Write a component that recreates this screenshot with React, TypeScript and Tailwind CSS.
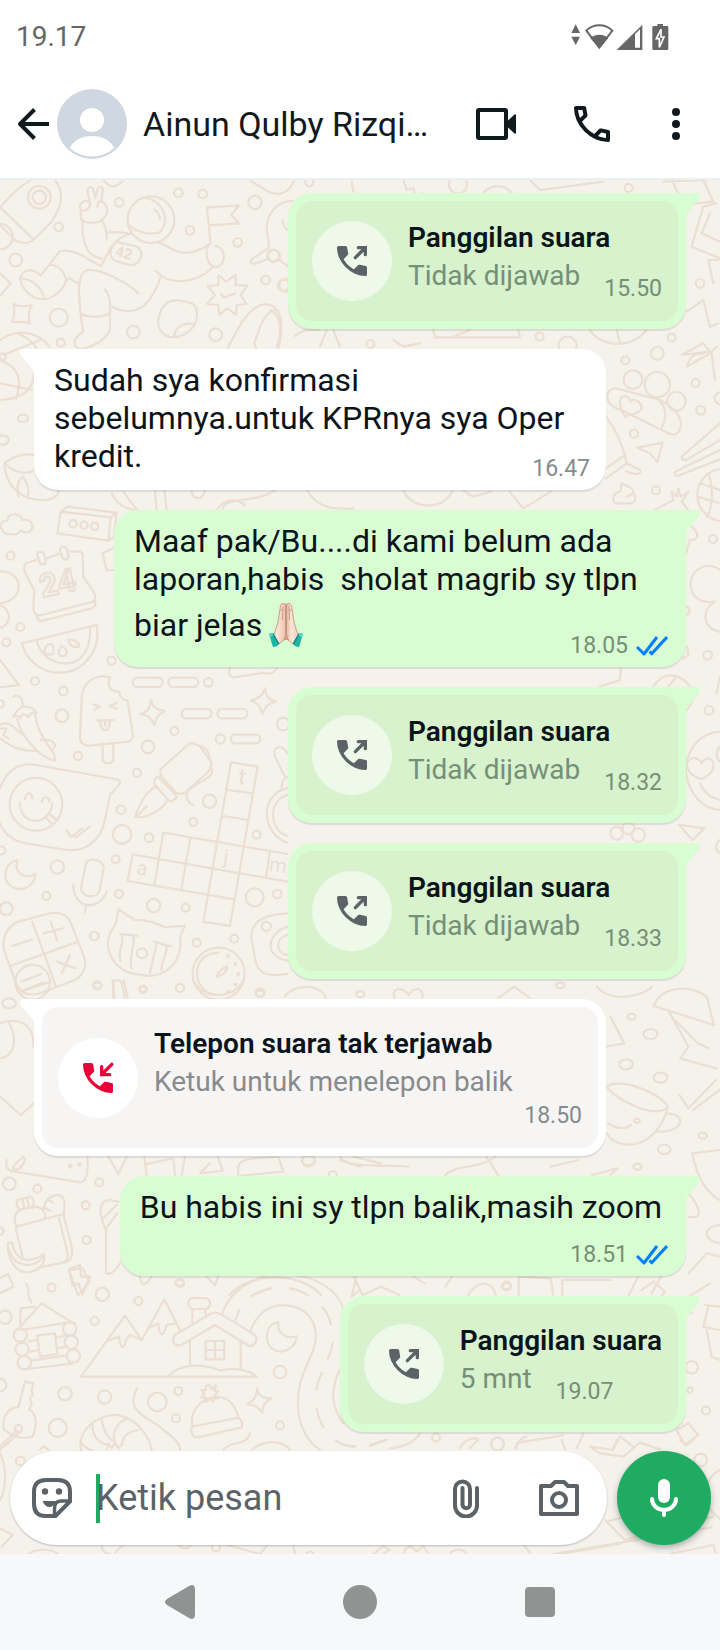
// src/App.tsx
import type { ReactNode } from 'react';

type Message =
  | { kind: 'call'; out: boolean; missed?: boolean; title: string; detail: string; time: string }
  | { kind: 'text'; out: boolean; body: string; emoji?: boolean; time: string; wide?: boolean };

const messages: Message[] = [
  { kind: 'call', out: true, title: 'Panggilan suara', detail: 'Tidak dijawab', time: '15.50' },
  { kind: 'text', out: false, body: 'Sudah sya konfirmasi sebelumnya.untuk KPRnya sya Oper kredit.', time: '16.47' },
  {
    kind: 'text',
    out: true,
    body: 'Maaf pak/Bu....di kami belum ada laporan,habis  sholat magrib sy tlpn biar jelas',
    emoji: true,
    time: '18.05',
  },
  { kind: 'call', out: true, title: 'Panggilan suara', detail: 'Tidak dijawab', time: '18.32' },
  { kind: 'call', out: true, title: 'Panggilan suara', detail: 'Tidak dijawab', time: '18.33' },
  {
    kind: 'call',
    out: false,
    missed: true,
    title: 'Telepon suara tak terjawab',
    detail: 'Ketuk untuk menelepon balik',
    time: '18.50',
  },
  { kind: 'text', out: true, body: 'Bu habis ini sy tlpn balik,masih zoom', time: '18.51', wide: true },
  { kind: 'call', out: true, title: 'Panggilan suara', detail: '5 mnt', time: '19.07' },
];

const HANDSET =
  'M19.95 21q-3.125 0-6.175-1.363-3.05-1.362-5.55-3.862-2.5-2.5-3.862-5.55Q3 7.175 3 4.05q0-.45.3-.75T4.05 3H8.1q.35 0 .625.238.275.237.325.562l.65 3.5q.05.4-.025.675-.075.275-.275.475L6.975 10.9q.5.925 1.187 1.787.688.863 1.513 1.663.775.775 1.625 1.437.85.663 1.8 1.213l2.35-2.35q.225-.225.588-.338.362-.112.712-.062l3.45.7q.35.1.575.363.225.262.225.587v4.05q0 .45-.3.75t-.75.3Z';

// Doodle sheets: each one is a block of line art with its own origin and scale
const doodles: { at: string; lines: string[]; dots: number[][] }[] = [
  {
    at: 'translate(0 170) scale(.3333)',
    lines: [
      'M0 112C30 80 60 45 98 28M165 30C195 70 185 110 155 155L103 207C85 225 60 220 45 210L0 165M0 112L98 206',
      'M242 120C232 95 262 85 270 100L262 62C265 45 280 50 282 65L286 84L292 60C296 45 312 50 308 65L303 95C322 100 330 125 310 147C290 165 250 160 242 145ZM242 120C255 125 272 115 270 100M292 110C292 95 300 90 303 95',
      'M248 155C245 205 255 260 305 266M305 150C318 170 322 190 320 207M320 188C345 185 370 187 395 192',
      'M430 82C490 90 515 150 478 188M385 165C420 195 460 192 478 188M462 118C473 125 479 135 480 148',
      'M393 192C340 200 325 250 303 288L265 268C240 250 210 238 180 243L122 317C100 295 70 295 60 325C65 360 100 390 130 388C160 385 185 365 198 335C198 310 180 285 150 285M62 325C95 325 130 355 132 388M198 335L208 323C220 335 230 340 240 338',
      'M355 217L405 228C425 235 428 255 420 268C412 285 400 287 385 284L345 272C328 262 330 245 336 232Q342 216 355 217Z',
      'M415 370C380 335 300 295 262 300C235 310 235 350 238 385C240 430 245 460 250 485L228 503C215 530 235 540 255 535C290 525 315 510 330 480L330 408C330 380 322 365 314 358M245 434C275 443 305 443 330 430M330 408C380 435 430 430 460 370C470 355 478 335 482 320M467 303C510 350 590 340 640 290M475 217C510 225 540 280 630 222',
      'M632 222L621 113L717 106L694 135L717 160L628 166M630 222C612 235 618 290 648 291C680 290 680 230 645 228',
      'M656 315L678 335L707 315L707 345L742 347L722 375L740 402L710 405L708 434L682 415L658 434L655 405L621 402L645 375L623 348L655 345ZM663 372L672 383L705 370',
      'M500 400C520 385 560 392 580 403C597 420 592 450 582 468C565 490 540 503 515 502C490 500 470 475 475 450C480 425 485 410 500 400ZM522 500C528 470 540 460 585 460',
      'M683 535C710 480 750 400 800 403C850 408 850 470 835 537M830 420C790 420 775 490 763 520L768 535',
      'M40 402C60 412 75 410 95 405C85 425 85 445 90 460C70 455 55 455 36 456C45 435 45 420 40 402Z',
      'M0 510C60 470 120 490 148 530M10 555L120 510M50 490C80 500 100 520 110 535M0 310L32 340L0 378',
      'M885 93C830 90 800 130 800 180C805 210 810 225 805 235L755 268C745 285 765 285 800 268M838 270L862 288M848 150Q850 170 862 180',
      'M310 30C335 60 350 50 372 30M748 30L800 62C840 85 870 65 883 30',
    ],
    dots: [
      [118, 82, 34], [118, 82, 20], [453, 149, 70], [358, 97, 13], [535, 68, 13], [608, 72, 13], [570, 181, 13],
      [713, 217, 13], [797, 330, 13], [176, 171, 13], [47, 270, 19], [176, 443, 27], [400, 486, 19], [182, 518, 12],
      [647, 494, 19], [765, 97, 20], [0, 200, 38], [820, 257, 18], [857, 346, 19], [8, 560, 10],
    ],
  },
  {
    at: 'translate(270 180) scale(.3333)',
    lines: [
      'M1180 5L1310 0M1210 10L1240 75L1330 65L1300 0M1340 70L1300 80L1265 200L1350 235M1320 100L1295 160L1350 185M1345 240L1315 240L1330 310M1250 395L1300 360L1320 440L1345 430M780 0L810 30L1000 5',
      'M490 450L495 472L750 472L745 450M550 470L600 450M150 500L170 450M75 468C100 445 130 448 150 450M190 450L210 500M370 480L400 500L450 490M960 450C990 500 1080 510 1130 450M1040 450L1050 490',
      'M245 5L250 35M400 0L410 30L430 25L440 50L460 40M640 38C660 15 700 10 725 38M0 390C30 400 40 450 20 500',
    ],
    dots: [
      [564, 14, 27], [118, 7, 12], [1076, 24, 12], [1290, 310, 13], [1205, 473, 12], [809, 470, 12], [301, 492, 12],
      [893, 497, 27], [12, 228, 18], [41, 316, 17],
    ],
  },
  {
    at: 'translate(0 340) scale(.459 .3333)',
    lines: [
      'M10 370C10 440 50 485 100 480C125 475 130 460 125 450M10 370C30 345 60 340 74 345M10 370C30 400 60 405 74 390M40 470C35 440 40 420 50 410C60 430 65 450 60 475',
      'M0 180C50 175 72 150 75 100M0 60C40 80 50 120 35 175M0 130L70 150',
      'M485 505C490 470 560 490 600 450M670 452C690 500 720 510 770 505M880 452C890 500 960 520 985 455M1010 452L1030 470L1070 455M1110 455L1140 505L1200 455',
    ],
    dots: [[50, 235, 11], [5, 300, 14]],
  },
  {
    at: 'translate(0 480) scale(.3333)',
    lines: [
      'M20 162C-5 150 0 120 22 122C25 95 60 100 68 120C98 112 108 150 85 157C70 160 65 150 62 152C50 170 35 160 20 162Z',
      'M182 95L332 112L325 182L172 160ZM182 95L203 80L350 98L332 112M350 98L342 172L325 182',
      'M108 240L78 250C70 260 72 270 76 280L103 330L100 380C100 400 110 410 125 405L280 365C290 355 285 340 280 335L250 290L248 225C248 215 240 213 208 215M140 235L176 222M110 405C112 420 118 425 130 422L275 385C285 382 287 372 286 362',
      'M112 225C112 212 130 212 133 225L138 245C136 257 122 257 118 245ZM180 210C182 197 198 197 201 210L206 230C204 242 190 242 186 230Z',
      'M0 274C70 270 80 360 0 370M0 375C40 390 30 440 0 443M340 205L308 220L320 272L342 270M0 540L57 615L0 622',
      'M65 490L290 435C305 520 240 580 178 578C120 578 80 540 65 490ZM110 482C130 570 280 590 270 440',
      'M133 512C140 485 165 485 160 520C145 530 135 520 133 512ZM185 497C170 515 175 530 190 528C205 525 205 510 185 497ZM205 478C225 478 240 490 237 500C220 505 205 495 205 478Z',
      'M412 593H474A14 14 0 0 1 474 621H412A14 14 0 0 1 412 593ZM519 593H581A14 14 0 0 1 581 621H519A14 14 0 0 1 519 593ZM559 687H621A14 14 0 0 1 621 715H559A14 14 0 0 1 559 687ZM666 687H728A14 14 0 0 1 728 715H666A14 14 0 0 1 666 687ZM705 764H768A13 13 0 0 1 768 790H705A13 13 0 0 1 705 764Z',
      'M453 660C460 685 470 690 495 693C472 705 468 712 463 736C452 712 445 705 420 702C445 695 450 685 453 660ZM795 625C798 650 805 658 827 665C805 672 795 680 787 701C780 680 775 668 752 662C775 655 788 648 795 625Z',
      'M330 592C280 580 245 610 245 660L240 770C240 790 250 797 270 797L385 785C398 780 400 770 398 760L383 662C365 660 360 650 357 635C330 635 320 615 330 592ZM308 797L308 835C310 855 338 855 340 835L340 792M280 673L300 680L283 690M350 668L330 679L350 686M292 722L340 720M300 722C300 760 332 760 330 721M315 722L316 738',
      'M40 650C60 640 70 660 68 680M40 710C50 690 60 680 75 680C95 680 105 690 110 700C95 695 90 700 85 712C75 700 65 700 60 715C55 705 50 705 40 710M52 718C60 760 110 830 165 842C170 810 120 790 105 705M0 735C30 720 40 745 70 765M0 775C40 805 70 815 110 812M122 780L145 780C165 785 170 800 160 805M0 745L20 745L10 765L25 775',
      'M0 925C20 870 60 845 110 855L350 898C362 902 362 910 357 915L330 945L315 1020C300 1090 250 1115 200 1110L80 1090C40 1085 10 1060 0 1030M60 968C60 1040 150 1040 157 970M75 957C78 935 95 935 97 955M125 965C130 945 147 950 148 965M135 1012L155 1030M148 1002L168 1018M200 1050L213 1072L247 1045M227 1072L270 1040',
      'M485 865L560 798C570 788 585 788 600 800L630 840C640 855 630 870 620 880L555 938C545 945 535 942 525 935L485 890C480 882 480 872 485 865ZM475 890L530 948C530 962 510 965 505 960L465 915C460 905 465 893 475 890ZM467 920C440 935 425 960 405 1010C420 1018 480 1000 500 965M410 1010L440 978M595 797C620 800 630 820 628 835M635 865C650 900 560 910 560 950C562 965 570 972 580 975',
      'M693 847L773 860L690 1338L610 1326ZM683 930L758 940M668 1008L745 1020M398 1123L862 1205M383 1203L704 1258M398 1123L383 1203M490 1058L862 1122M490 1058L463 1216M571 1075L544 1228M810 1115L798 1192',
      'M52 1140C10 1150 5 1200 35 1220C70 1240 105 1215 106 1182C75 1200 40 1180 52 1140ZM258 1150C270 1130 310 1140 311 1165L300 1225C295 1260 245 1255 243 1225ZM220 1215C220 1290 300 1295 321 1233M258 1275L255 1297',
      'M55 1325L150 1300C185 1293 205 1310 213 1330L252 1430C262 1465 250 1485 225 1500L120 1540C85 1550 60 1540 48 1510L12 1410C5 1375 20 1340 55 1325ZM97 1325L168 1520M30 1458L235 1385M37 1398L98 1378M132 1360L190 1345M152 1325L172 1382M170 1445L225 1465M210 1425L185 1480M63 1505L125 1482M72 1530L132 1507',
      'M355 1288L405 1320C440 1320 470 1330 495 1342L555 1337L540 1370C550 1440 500 1500 420 1485C340 1475 310 1410 330 1360L348 1330ZM360 1362L412 1368M462 1385L512 1400M365 1365C375 1390 350 1410 362 1445M400 1370C405 1400 385 1430 395 1465M470 1390C465 1420 455 1450 450 1480M500 1400C500 1430 480 1450 485 1475',
      'M655 1418C565 1420 575 1545 655 1545M650 1490C655 1475 668 1462 682 1460C680 1475 668 1488 650 1490ZM340 1560L340 1510C345 1498 362 1498 366 1510L375 1560M862 1300C780 1305 750 1330 755 1380L768 1450C780 1485 810 1490 862 1482M862 1340C800 1360 790 1430 862 1442M862 1365C825 1375 825 1420 862 1425',
      'M335 40C350 70 370 85 410 92M370 35L412 92M465 32L470 92M493 30L500 92M648 92C670 60 700 50 735 75M862 925C780 940 780 1060 862 1088M862 945C805 960 805 1050 862 1068M862 890C845 900 845 910 845 925M862 820C845 790 815 800 825 830L855 890M690 565C680 590 700 595 715 590L790 578C810 585 825 578 830 565',
    ],
    dots: [
      [219, 131, 11], [252, 135, 11], [284, 139, 11], [32, 227, 12], [61, 441, 12], [19, 487, 12], [105, 603, 12],
      [190, 633, 13], [186, 707, 19], [335, 542, 12], [625, 607, 13], [523, 753, 12], [444, 801, 19], [661, 777, 14],
      [234, 828, 12], [411, 879, 12], [363, 989, 13], [366, 1063, 28], [447, 1073, 13], [629, 964, 20], [580, 1026, 12],
      [347, 1138, 12], [172, 1161, 20], [139, 1248, 12], [19, 1286, 19], [357, 1242, 12], [461, 1277, 20],
      [557, 1283, 12], [283, 1368, 13], [590, 1388, 12], [703, 1376, 12], [764, 1252, 27], [832, 1242, 13],
      [770, 1064, 12], [292, 1516, 12], [429, 1528, 11], [540, 1524, 12], [780, 1538, 13], [850, 732, 19],
      [799, 1339, 14], [108, 973, 79], [98, 1507, 52], [656, 1481, 78], [426, 1420, 15], [684, 1428, 3], [706, 1452, 3],
      [715, 1483, 3], [706, 1514, 3], [684, 1536, 3], [4, 1111, 12], [594, 35, 19], [0, 672, 12],
    ],
  },
  {
    at: 'translate(600 340) scale(.3333)',
    lines: [
      'M22 175C20 150 40 140 60 148L180 180C230 205 250 240 240 265C235 285 220 287 205 280L75 215C40 205 25 190 22 175ZM60 180C70 160 90 170 90 185C105 170 125 190 125 205C115 225 95 220 75 230C65 215 58 195 60 180ZM180 185C200 205 200 235 185 262',
      'M112 323L188 308L172 367L150 340ZM360 250L245 350C245 362 255 362 262 358L360 300M225 395L360 330M225 395C222 408 230 410 240 405L360 358',
      'M65 430C80 440 100 440 100 458C115 480 100 490 90 490L50 490C35 485 35 460 60 455C65 445 60 440 65 430ZM80 470L100 460',
      'M300 430L360 450M325 400C340 440 340 500 320 530M292 470L360 490M245 45L310 10L330 35ZM260 80L330 40L350 20M260 80C270 50 280 40 310 40M335 40L345 120',
      'M18 230C50 270 70 320 80 370L18 415M75 345L18 385M80 370L120 390C125 405 110 405 78 395M165 510L220 480L215 455L230 470L235 445L242 470L265 455L245 485L265 510',
      'M360 690C320 660 270 690 272 735C275 780 310 790 345 785C300 810 310 870 360 875M275 560C300 580 295 600 270 600L258 640M258 800C275 805 270 820 258 825M262 920L265 945L250 955',
      'M360 1175C290 1180 255 1240 258 1300C270 1370 310 1405 360 1410M260 1270C280 1240 300 1260 305 1270C320 1240 350 1260 338 1290C330 1305 320 1310 305 1318C280 1310 262 1300 260 1270ZM300 1330C320 1370 340 1375 360 1380M360 1220C345 1235 350 1260 360 1265',
      'M237 1455L313 1465L278 1500ZM360 1010L350 1060M160 1040C190 990 240 1000 270 1040M205 1040L225 1015M280 1080L262 1110M0 1040L60 1020L62 985',
    ],
    dots: [
      [76, 61, 12], [172, 40, 19], [99, 119, 28], [172, 134, 38], [229, 184, 28], [287, 129, 12], [302, 211, 13],
      [102, 281, 12], [168, 451, 12], [339, 597, 12], [323, 946, 13], [327, 1111, 13], [370, 465, 78], [362, 175, 18],
      [50, 1480, 19], [85, 1465, 18], [115, 1485, 20], [370, 1520, 22],
    ],
  },
  {
    at: 'translate(0 980) scale(.459 .3333)',
    lines: [
      'M1423 80C1440 20 1500 10 1540 50L1555 135L1425 78M1455 90L1500 200L1482 235L1560 265M1470 120L1520 190L1545 205M1300 20C1330 70 1400 50 1420 20M1330 110L1360 190L1320 200',
      'M1322 320C1350 290 1440 340 1455 380C1430 420 1340 360 1322 320ZM1322 460C1340 510 1430 520 1455 380M1450 400C1500 400 1490 460 1430 455M1325 430C1340 445 1360 450 1375 435M1480 345L1500 385L1560 300M1510 390L1568 330',
      'M1508 520C1520 600 1540 640 1568 660M1508 520L1568 510M1500 640C1530 690 1530 720 1500 710M1568 735C1530 740 1530 780 1568 790M1500 880L1540 820L1568 830',
      'M45 35L110 5M420 0C440 60 510 60 530 0M620 50C640 10 700 10 710 55M860 55C850 20 880 20 890 45C900 20 925 20 920 55M1085 55L1120 20L1155 55M245 0L250 55M270 0L278 55',
      'M0 130C40 110 75 130 73 200M0 350L45 405L74 370M0 235C30 230 40 180 20 130',
      'M740 530C760 570 830 550 890 560M770 530L830 550M970 585C1000 550 1040 570 1080 530M1060 530L1085 585M1200 560L1260 540M1290 585L1345 565L1330 585',
      'M500 945C540 880 650 870 700 945M550 945L590 925M770 890L790 945L830 920L870 945M900 890L925 910M970 920L985 890M1020 945C1040 900 1070 900 1080 945M1130 945L1130 890L1200 895L1205 945M1225 945L1225 900L1330 900M1390 890L1370 945M1440 890L1420 940M150 870L180 865L195 905L170 945Z',
    ],
    dots: [
      [20, 70, 15], [212, 16, 9], [312, 28, 8], [567, 40, 9], [785, 43, 9], [1221, 16, 9], [1376, 110, 9],
      [1417, 162, 15], [1364, 253, 15], [1439, 293, 15], [1388, 422, 6], [1531, 467, 9], [1447, 508, 14],
      [1389, 560, 9], [672, 542, 14], [391, 908, 9], [1103, 918, 9],
    ],
  },
  {
    at: 'translate(0 1150) scale(.3333)',
    lines: [
      'M20 30C15 55 25 62 40 64L240 97C260 95 265 70 262 20M70 20C50 40 30 50 45 60C60 60 75 40 75 25',
      'M50 230L190 192L215 290C220 325 210 335 190 338L115 353M50 230C35 200 50 178 75 175L110 170C130 175 138 190 135 205M68 320L47 235M175 197L203 310C205 330 195 338 180 340M52 150L92 140C102 145 104 160 98 170L60 178C48 170 48 160 52 150ZM68 148L72 172M82 145L86 170M130 180C135 140 170 125 188 142C200 160 190 180 192 192M145 150L160 158M135 175L152 182',
      'M24 278C20 330 50 370 85 367C115 362 135 345 133 313C120 312 120 330 80 330C50 325 38 300 37 278ZM28 300C40 350 100 360 130 320M207 358L240 345L243 380L270 380L247 433L235 400L218 408Z',
      'M60 530L125 460L212 515L225 520M60 530L62 475L105 470M65 540L200 518M85 575L110 570M170 562L195 558M112 557L165 550L172 612L120 620ZM80 657L220 640M90 605L118 600M172 595L200 590M92 632L200 616M78 402C95 420 75 430 95 458',
      'M243 680L375 497L425 570L493 448L540 540M322 573L358 560C360 600 372 600 378 570L390 555L425 570M445 535L475 520C478 560 490 565 500 525L528 520M243 680L770 680C750 660 700 652 660 662C610 640 540 640 505 678',
      'M525 555L630 492C645 485 655 488 665 494L765 555C775 570 765 590 748 588L645 525L545 585C525 590 510 575 525 555ZM570 572L570 648M722 572L722 657M617 573H673V628H617ZM645 573V628M617 600H673M577 515V478M617 478V492M581 444H614A16 16 0 0 1 614 477H581A16 16 0 0 1 581 444Z',
      'M668 488C700 400 800 370 850 372C950 375 1010 420 1030 475M750 545C780 470 830 463 860 466C940 475 960 540 940 600C900 690 890 720 895 780C900 840 930 880 960 900M1018 660C990 730 995 770 1030 820M755 438Q780 422 812 415M870 415Q900 420 925 436M967 472Q985 490 993 523M998 578Q995 605 983 628M966 668Q952 695 950 720M950 775Q955 805 970 832M705 515L717 482M1008 872Q1030 888 1062 891M1055 440L1070 378M1055 440L1080 420',
      'M835 516C800 520 790 570 815 595C850 620 890 590 890 558C860 570 830 550 835 516ZM772 715C775 740 790 745 815 745C795 755 788 765 787 789C775 770 765 765 742 762C762 752 768 745 772 715Z',
      'M577 830L710 804C725 805 730 820 725 832L595 862C575 865 570 840 577 830ZM577 828C560 750 690 690 715 803M628 704L634 718L648 706L643 722L656 724L645 734L655 745L641 744L640 756L630 746L618 756L617 743L602 742L614 732L604 720L618 720L616 708Z',
      'M75 695L100 700L95 720L98 735L90 745L95 760L88 780C110 785 112 830 98 860C70 870 40 860 12 840C5 810 20 770 55 772ZM50 842L0 890M58 848L0 900',
      'M243 900C230 820 330 780 370 800C420 815 450 870 455 900M278 825C275 860 300 880 325 885M305 805C310 850 330 870 345 875M385 805C350 815 335 850 345 875M415 840C380 845 370 860 365 885M320 900L325 880L335 895L345 878L355 895L368 882',
      'M412 715C370 790 450 800 490 840C520 860 540 880 540 900M670 900C690 870 740 890 750 850M755 900C790 870 850 870 870 900M120 900L130 888L145 900',
      'M318 370L318 240C290 180 300 150 330 150L355 155M318 370C325 375 340 370 360 340M310 205L350 165M318 235L352 190M0 385L25 372L40 410L0 430',
      'M325 20L340 45L355 72L380 20M432 10L440 78M440 42L520 25L525 75M545 75L555 20M600 70L668 62L650 10M600 70L630 40M715 78C710 40 720 30 760 25L835 20L850 65M715 78L850 65M1020 30L1080 50M420 380C425 410 435 410 455 380M620 380L645 405L655 380',
    ],
    dots: [
      [28, 101, 19], [112, 116, 12], [298, 97, 12], [257, 166, 12], [260, 270, 12], [155, 413, 12], [307, 433, 20],
      [415, 453, 12], [284, 513, 12], [540, 399, 12], [195, 731, 20], [314, 741, 20], [472, 756, 28], [535, 723, 12],
      [528, 805, 12], [173, 834, 27], [840, 666, 19], [840, 826, 12], [925, 30, 19], [15, 502, 20], [61, 555, 20],
      [66, 598, 20], [73, 638, 20], [209, 537, 20], [214, 577, 20], [220, 618, 20], [55, 836, 11], [0, 705, 19],
      [211, 49, 4], [238, 44, 4], [998, 75, 12], [0, 243, 11],
    ],
  },
  {
    at: 'translate(330 1280) scale(.3333)',
    lines: [
      'M1125 75L1170 80M1135 80L1120 140L1170 150M1130 150L1145 230L1170 240M1085 100L1060 60L1140 10M935 30L970 5L1005 35L995 48M1040 450L1075 430L1105 465L1065 495ZM20 485Q45 500 75 498M120 498L170 480M180 505C220 500 250 490 270 460M390 505C400 480 430 470 445 478L420 505M560 505C555 480 580 490 700 465M740 505L760 460M850 505L870 470L910 500',
    ],
    dots: [[530, 18, 13], [1085, 262, 19], [1128, 391, 12], [1080, 330, 8], [318, 472, 12], [503, 492, 19]],
  },
  {
    at: 'translate(0 1440) scale(.3333)',
    lines: [
      'M240 0C245 20 270 30 275 30M0 40C20 80 20 150 0 180M0 265L38 285L5 320M85 342C110 325 150 325 175 342M305 318C305 335 320 342 330 342M370 318C350 325 345 342 345 342M535 315Q555 335 575 315M680 315L780 342L800 318M880 318L885 342',
    ],
    dots: [[61, 63, 13], [648, 321, 12], [930, 344, 10]],
  },
  {
    at: 'translate(360 1440) scale(.3333)',
    lines: [
      'M30 15L75 0M605 0L615 28M690 20L720 40L790 50L840 8L900 28M690 20L760 30L770 0M735 240L795 300L1060 230M740 245L800 230M580 342L1055 262M600 342L780 312M930 342L1060 315L1068 342M490 312L512 342M130 342C140 310 160 320 170 335L190 318L205 342M40 342L70 318L88 330L70 342M270 342C280 325 310 325 320 342M465 25C475 0 490 -10 500 -10M1080 90C1030 110 1020 200 1080 235M960 0L980 15L1000 0',
    ],
    dots: [[412, 12, 19], [1022, 60, 19]],
  },
];

function Wallpaper() {
  return (
    <svg
      viewBox="0 180 720 1374"
      preserveAspectRatio="xMidYMin slice"
      className="absolute inset-0 h-full w-full [&_circle]:[vector-effect:non-scaling-stroke] [&_path]:[vector-effect:non-scaling-stroke]"
      fill="none"
      stroke="#eadfd2"
      strokeWidth="2.2"
      strokeLinecap="round"
      strokeLinejoin="round"
      aria-hidden="true"
    >
      {doodles.map((sheet) => (
        <g key={sheet.at} transform={sheet.at}>
          {sheet.lines.map((d) => (
            <path key={d} d={d} />
          ))}
          {sheet.dots.map(([cx, cy, r]) => (
            <circle key={`${cx}-${cy}-${r}`} cx={cx} cy={cy} r={r} />
          ))}
        </g>
      ))}
      <g fill="#eadfd2" stroke="none" textAnchor="middle">
        <text x="124" y="258" fontSize="15" fontWeight="700" transform="rotate(16 124 253)">
          42
        </text>
        <text x="242" y="784" fontSize="22" transform="rotate(8 242 777)">
          t
        </text>
        <text x="142" y="875" fontSize="20" transform="rotate(8 142 869)">
          a
        </text>
        <text x="226" y="864" fontSize="20" transform="rotate(8 226 858)">
          j
        </text>
        <text x="278" y="872" fontSize="20" transform="rotate(8 278 867)">
          m
        </text>
      </g>
      <text x="58" y="594" fontSize="32" fontWeight="700" strokeWidth="2" textAnchor="middle" transform="rotate(-12 58 584)">
        24
      </text>
    </svg>
  );
}

function StatusIcons() {
  return (
    <svg viewBox="0 0 294 81" className="h-[27px] w-[98px]" fill="#666" aria-hidden="true">
      <path d="M14 1L27 27H1zM1 38H27L14 63z" />
      <path d="M85 32c12 0 20 4 27 10L85 73 58 42c7-6 15-10 27-10z" />
      <path d="M85 4c17 0 29 6 39 16L85 71 46 20C56 10 68 4 85 4z" fill="none" stroke="#666" strokeWidth="6" />
      <path d="M214 2v76h-77zM192 30v41h15V16z" fillRule="evenodd" />
      <path d="M259 0h17v6h12q4 0 4 4v64q0 4-4 4h-40q-4 0-4-4V10q0-4 4-4h11z" />
      <path d="M270 16L256 44h9v26l14-31h-9z" stroke="#fff" strokeWidth="5" fill="#666" />
    </svg>
  );
}

function CallIcon({ missed }: { missed?: boolean }) {
  return (
    <svg
      viewBox="0 0 24 24"
      className={missed ? 'h-10 w-10 text-[#ea0038]' : 'h-10 w-10 text-[#5b6368]'}
      fill="currentColor"
      aria-hidden="true"
    >
      <path d={HANDSET} />
      <path
        d={missed ? 'M20.3 3.8L14.2 9.9M14.2 5.2V10H19' : 'M14 10L19.8 4.2M15.8 4H20V8.2'}
        fill="none"
        stroke="currentColor"
        strokeWidth="2"
        strokeLinecap="round"
      />
    </svg>
  );
}

function ReadTicks() {
  return (
    <svg viewBox="0 0 32 22" className="mr-0.5 h-[22px] w-8" fill="none" stroke="#027eff" strokeWidth="3" role="img" aria-label="Dibaca">
      <path d="M1 12l7 7L21 2M15 19.500L31 2M13.500 16.500l3 3" strokeLinejoin="round" />
    </svg>
  );
}

function PrayingHands() {
  return (
    <svg viewBox="0 0 36 44" className="my-[5px] ml-[6px] inline h-[44px] w-9 align-[-16px]" role="img" aria-label="Terima kasih">
      <defs>
        <linearGradient id="skin" x1="0" x2="1">
          <stop offset="0" stopColor="#e3b7a0" />
          <stop offset=".35" stopColor="#fbe6da" />
          <stop offset="1" stopColor="#eec4ae" />
        </linearGradient>
      </defs>
      <path d="M17.500 1c-2-1-4.500-.5-5 1.500L10 19 7 29l-3 5 7 7 5-4 1.500-5z" fill="url(#skin)" stroke="#c48d76" strokeWidth=".8" />
      <path d="M18.500 1c2-1 4.500-.5 5 1.500L26 19l3 10 3 5-7 7-5-4-1.500-5z" fill="url(#skin)" stroke="#c48d76" strokeWidth=".8" />
      <path d="M15 3l-.5 14M21 3l.5 14M18 2v33M12 7h3M21 7h3" stroke="#c48d76" strokeWidth=".8" fill="none" />
      <path d="M15 37l3-5 3 5z" fill="#d29c84" />
      <path d="M1 31q3-2 5 0l5 10q-2 3-6 3z" fill="#1fb3a3" />
      <path d="M35 31q-3-2-5 0l-5 10q2 3 6 3z" fill="#1fb3a3" />
      <path d="M1 31q3-2 5 0l1 2q-3-1-5 2zM35 31q-3-2-5 0l-1 2q3-1 5 2z" fill="#5fd6c8" />
      <path d="M5 31l6 10M31 31l-6 10" stroke="#0b8377" strokeWidth="1.200" />
    </svg>
  );
}

function Bubble({ out, full, children }: { out: boolean; full?: boolean; children: ReactNode }) {
  return (
    <li className={out ? 'flex justify-end' : 'flex justify-start'}>
      <div
        className={`relative max-w-[572px] rounded-[24px] shadow-[0_2px_1px_rgba(11,20,26,0.1)] ${full ? 'w-full' : ''} ${
          out ? 'rounded-tr-none bg-[#d9fdd3]' : 'rounded-tl-none bg-white'
        }`}
      >
        {out ? (
          <svg viewBox="0 0 15 24" className="absolute top-0 -right-[14px] h-6 w-[15px]" fill="#d9fdd3" aria-hidden="true">
            <path d="M0 0h12q3 0 3 3 0 2-1.500 4L1 22v2H0z" />
          </svg>
        ) : (
          <svg viewBox="0 0 15 24" className="absolute top-0 -left-[14px] h-6 w-[15px]" fill="#fff" aria-hidden="true">
            <path d="M15 0H3Q0 0 0 3q0 2 1.500 4L14 22v2h1z" />
          </svg>
        )}
        {children}
      </div>
    </li>
  );
}

function CallMessage({ message }: { message: Extract<Message, { kind: 'call' }> }) {
  const { out, missed, title, detail, time } = message;
  const muted = out ? 'text-[#768f77]' : 'text-[#868b8d]';

  return (
    <Bubble out={out} full={missed}>
      <div className="p-2">
        <div className={`flex gap-4 rounded-[16px] px-4 pt-[18px] pb-5 ${out ? 'bg-[#d7f2cd]' : 'bg-[#f6f5f4]'}`}>
          <button
            type="button"
            aria-label={title}
            className={`mt-0.5 flex h-20 w-20 shrink-0 items-center justify-center self-center rounded-full ${
              out ? 'bg-[#eef9ea]' : 'bg-white'
            }`}
          >
            <CallIcon missed={missed} />
          </button>
          <div className="flex grow flex-col">
            <p className="text-[28px] leading-[38px] font-semibold text-[#0b141a]">{title}</p>
            {missed ? (
              <>
                <p className={`text-[28px] leading-[38px] ${muted}`}>{detail}</p>
                <time className={`mt-[3px] self-end text-[23px] leading-6 ${muted}`}>{time}</time>
              </>
            ) : (
              <div className={`flex items-end gap-6 ${muted}`}>
                <p className="mb-[6px] text-[28px] leading-[38px]">{detail}</p>
                <time className="text-[23px] leading-6">{time}</time>
              </div>
            )}
          </div>
        </div>
      </div>
    </Bubble>
  );
}

function TextMessage({ message }: { message: Extract<Message, { kind: 'text' }> }) {
  const { out, body, emoji, time, wide } = message;

  return (
    <Bubble out={out}>
      <div className="flex flex-col pt-3 pr-4 pb-[9px] pl-5">
        <p className="pr-2 text-[32px] leading-[38px] whitespace-pre-wrap text-[#0b141a]">
          {body}
          {emoji && <PrayingHands />}
        </p>
        <div
          className={`flex items-center gap-2 self-end text-[23px] leading-6 ${wide ? 'mt-[17px]' : '-mt-[18px]'} ${
            out ? 'text-[#768f77]' : 'text-[#868b8d]'
          }`}
        >
          <time>{time}</time>
          {out && <ReadTicks />}
        </div>
      </div>
    </Bubble>
  );
}

function Header() {
  return (
    <header className="border-b-2 border-[#eceff1] bg-white">
      <div className="flex h-[70px] items-center justify-between pt-1 pr-[51px] pl-4">
        <span className="text-[28px] leading-8 text-[#666]">19.17</span>
        <StatusIcons />
      </div>
      <div className="flex h-[108px] items-center pr-2 pl-[17px] text-[#10191e]">
        <button type="button" aria-label="Kembali" className="mr-2">
          <svg viewBox="0 0 32 32" className="h-8 w-8" fill="none" stroke="currentColor" strokeWidth="4" aria-hidden="true">
            <path d="M32 16H3M17.500 1.500L3 16l14.500 14.500" strokeLinejoin="round" />
          </svg>
        </button>
        <svg viewBox="0 0 70 70" className="mr-4 h-[70px] w-[70px] shrink-0" role="img" aria-label="Foto profil">
          <circle cx="35" cy="35" r="35" fill="#cfd8e0" />
          <circle cx="35" cy="31" r="12" fill="#fff" />
          <path d="M12.500 59C17 51 25 47 35 47s18 4 22.500 12A34 34 0 0 1 12.500 59z" fill="#fff" />
        </svg>
        <h1 className="min-w-0 grow truncate text-[34px] leading-[44px]">Ainun Qulby Rizqi…</h1>
        <button type="button" aria-label="Panggilan video" className="flex w-24 shrink-0 justify-center">
          <svg viewBox="0 0 40 32" className="h-8 w-10" fill="currentColor" aria-hidden="true">
            <path
              d="M3 0h26q3 0 3 3v9.500L38.500 6.500Q40 5.500 40 7.500v17q0 2-1.500 1L32 19.500V29q0 3-3 3H3q-3 0-3-3V3q0-3 3-3zM4 4v24h24V4z"
              fillRule="evenodd"
            />
          </svg>
        </button>
        <button type="button" aria-label="Panggilan suara" className="flex w-24 shrink-0 justify-center">
          <svg viewBox="0 0 24 24" className="h-12 w-12" fill="currentColor" fillRule="evenodd" aria-hidden="true">
            <path
              d={`${HANDSET}M6.025 9l1.650-1.650L7.250 5H5.025q.125 1.025.35 2.025.225 1 .65 1.975Zm8.950 8.950q.975.425 1.988.675 1.012.25 2.037.325v-2.200l-2.350-.475Z`}
            />
          </svg>
        </button>
        <button type="button" aria-label="Opsi lainnya" className="flex w-[72px] shrink-0 justify-center">
          <svg viewBox="0 0 8 32" className="h-8 w-2" fill="currentColor" aria-hidden="true">
            <circle cx="4" cy="4" r="4" />
            <circle cx="4" cy="16" r="4" />
            <circle cx="4" cy="28" r="4" />
          </svg>
        </button>
      </div>
    </header>
  );
}

function Composer() {
  return (
    <form className="relative flex items-center gap-[10px] pr-[9px] pb-[9px] pl-[10px]" onSubmit={(e) => e.preventDefault()}>
      <div className="flex h-[94px] min-w-0 grow items-center rounded-full bg-white pr-7 pl-[22px] text-[#5b6368] shadow-[0_1px_2px_rgba(11,20,26,0.25)]">
        <button type="button" aria-label="Stiker" className="mr-6 shrink-0">
          <svg viewBox="0 0 40 40" className="h-10 w-10" fill="none" stroke="currentColor" strokeWidth="4" aria-hidden="true">
            <path d="M14 2h12q12 0 12 12v9.500L23.500 38H14Q2 38 2 26V14Q2 2 14 2z" />
            <path d="M22.500 38v-8q0-7 7-7H38" strokeWidth="3.500" />
            <path d="M10.500 23H24q-2.500 6-6.500 6-4.500 0-7-6z" fill="currentColor" stroke="none" />
            <circle cx="13" cy="13.500" r="3.200" fill="currentColor" stroke="none" />
            <circle cx="27" cy="13.500" r="3.200" fill="currentColor" stroke="none" />
          </svg>
        </button>
        <span className="h-[49px] w-1 shrink-0 bg-[#1fab61]" />
        <input
          type="text"
          aria-label="Ketik pesan"
          placeholder="Ketik pesan"
          className="-ml-1 min-w-0 grow bg-transparent text-[36px] leading-[48px] outline-none placeholder:text-[#5b6368]"
        />
        <button type="button" aria-label="Lampirkan" className="mr-[60px] shrink-0">
          <svg viewBox="0 0 26 40" className="h-10 w-[26px]" fill="none" stroke="currentColor" strokeWidth="4" strokeLinecap="round" aria-hidden="true">
            <path d="M24 10v17.500a11 11 0 0 1-22 0V11a7.500 7.500 0 0 1 15 0v15.500a3.750 3.750 0 0 1-7.500 0V10" />
          </svg>
        </button>
        <button type="button" aria-label="Kamera" className="shrink-0">
          <svg viewBox="0 0 40 36" className="h-9 w-10" fill="none" stroke="currentColor" strokeWidth="4" strokeLinejoin="round" aria-hidden="true">
            <path d="M2 6h10l4-4h9l4 4h9v28H2z" />
            <circle cx="20" cy="20" r="7" />
          </svg>
        </button>
      </div>
      <button
        type="button"
        aria-label="Rekam pesan suara"
        className="flex h-[94px] w-[94px] shrink-0 items-center justify-center rounded-full bg-[#1fab61] shadow-[0_3px_6px_rgba(11,20,26,0.3)]"
      >
        <svg viewBox="0 0 28 38" className="h-[38px] w-7" fill="none" stroke="#fff" strokeWidth="4" strokeLinecap="round" aria-hidden="true">
          <rect x="8" y="0" width="12" height="24" rx="6" fill="#fff" stroke="none" />
          <path d="M2 20a12 11 0 0 0 24 0M14 31v5" />
        </svg>
      </button>
    </form>
  );
}

function NavBar() {
  return (
    <nav aria-label="Navigasi" className="grid h-24 shrink-0 grid-cols-3 items-center justify-items-center bg-[#f7f8fa] px-[12.5%]">
      <button type="button" aria-label="Kembali ke sebelumnya">
        <svg viewBox="0 0 30 34" className="h-[34px] w-[30px]" fill="#919392" aria-hidden="true">
          <path d="M24 1q6-3 6 4v24q0 7-6 4L2 20q-4-3 0-6z" />
        </svg>
      </button>
      <button type="button" aria-label="Beranda" className="h-[34px] w-[34px] rounded-full bg-[#919392]" />
      <button type="button" aria-label="Aplikasi terbaru" className="h-[30px] w-[30px] rounded bg-[#919392]" />
    </nav>
  );
}

export default function App() {
  return (
    <div className="flex min-h-screen flex-col font-[Roboto,sans-serif]">
      <Header />
      <main className="relative flex grow flex-col justify-between overflow-hidden bg-[#f5f2eb]">
        <Wallpaper />
        <ul className="relative flex flex-col gap-5 px-[34px] pt-[13px] pb-[18px]">
          {messages.map((message) =>
            message.kind === 'call' ? (
              <CallMessage key={message.time} message={message} />
            ) : (
              <TextMessage key={message.time} message={message} />
            )
          )}
        </ul>
        <Composer />
      </main>
      <NavBar />
    </div>
  );
}
